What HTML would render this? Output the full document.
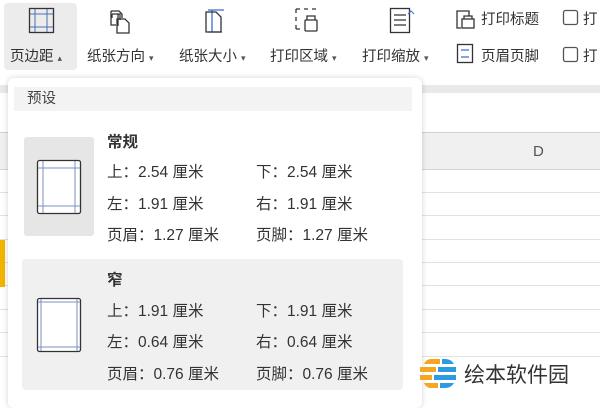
<!DOCTYPE html><html><head><meta charset="utf-8"><style>
*{margin:0;padding:0;box-sizing:border-box}
body{width:600px;height:400px;overflow:hidden;background:#fff;font-family:"Liberation Sans","Noto Sans CJK SC",sans-serif;color:#333;position:relative}
.a{position:absolute}
.lbl{font-size:14.5px;white-space:nowrap;color:#333}
.t{font-size:15.5px;white-space:nowrap;color:#333;line-height:20px}
.car{font-size:9px;color:#555}
.row{position:absolute;left:0;right:0;height:1px;background:#e2e2e2}
</style></head><body>
<div class="a" style="left:4px;top:3px;width:73px;height:67px;background:#ececec;border-radius:4px"></div>
<svg class="a" style="left:0;top:0" width="600" height="80">
<g fill="none" stroke="#333" stroke-width="1.3">
<rect x="29.5" y="8.5" width="24" height="24"/>
<path d="M112 14h8v6M118 14v12M112 18v-4" />
<path d="M111 11h8l3 3v4M111 11v14h5"/><path d="M117 19h8l4 4v10h-12z"/>
<path d="M212 10v22M208 10h16M208 32h14" stroke="#3a6ed8"/>
<path d="M206 12h10l5 5v15h-15z"/>
<path d="M296 9h4M304 9h4M312 9h4M296 9v4M296 17v4M296 25v4M296 29h4"/>
<rect x="305" y="20" width="12" height="11" rx="1"/><path d="M307 20v-4h8v4"/>
<rect x="390.5" y="8.5" width="19" height="24"/><path d="M394 15h12M394 20h12M394 25h12"/>
<path d="M462 11h-5v17h4M457 11h12v5" /><rect x="462" y="19" width="12" height="9"/><path d="M464 19v-3h8v3"/>
<rect x="457.5" y="44.5" width="15" height="18"/><path d="M461 50h8M461 57h8" stroke="#3a6ed8"/>
<rect x="563.5" y="10.5" width="14" height="14" rx="2" stroke="#555"/>
<rect x="563.5" y="47.5" width="14" height="14" rx="2" stroke="#555"/>
</g>
<g stroke="#4a6fb5" stroke-width="1"><path d="M35 9v23M47 9v23M30 14h23M30 27h23"/></g>
<path d="M408 14l3-3 3 3" stroke="#3a6ed8" fill="none"/>
</svg>
<div class="a lbl" style="left:10px;top:45px">页边距 <span class="car">▴</span></div>
<div class="a lbl" style="left:87px;top:45px">纸张方向 <span class="car">▾</span></div>
<div class="a lbl" style="left:179px;top:45px">纸张大小 <span class="car">▾</span></div>
<div class="a lbl" style="left:270px;top:45px">打印区域 <span class="car">▾</span></div>
<div class="a lbl" style="left:362px;top:45px">打印缩放 <span class="car">▾</span></div>
<div class="a lbl" style="left:481px;top:8px">打印标题</div>
<div class="a lbl" style="left:481px;top:45px">页眉页脚</div>
<div class="a lbl" style="left:583px;top:8px">打</div>
<div class="a lbl" style="left:583px;top:45px">打</div>
<div class="a" style="left:0;top:80px;width:600px;height:320px;background:#fff">
<div class="a" style="left:0;top:5px;width:600px;height:8px;background:#e9e9e9"></div>
<div class="a" style="left:0;top:52px;width:600px;height:38px;background:#f0f0f0;border-top:1px solid #d0d0d0;border-bottom:1px solid #d6d6d6"></div>
<div class="a" style="left:533px;top:63px;font-size:15px;color:#555">D</div>
<div class="row" style="top:112px"></div><div class="row" style="top:135px"></div><div class="row" style="top:159px"></div><div class="row" style="top:182px"></div><div class="row" style="top:205px"></div><div class="row" style="top:229px"></div><div class="row" style="top:252px"></div><div class="row" style="top:276px"></div>
<div class="a" style="left:0;top:160px;width:5px;height:47px;background:#f0b400"></div>
</div>
<div class="a" style="left:8px;top:78px;width:414px;height:330px;background:#fff;border-radius:6px;box-shadow:0 0 6px rgba(0,0,0,.18)"></div>
<div class="a" style="left:14px;top:87px;width:398px;height:24px;background:#f3f3f3"></div>
<div class="a t" style="left:27px;top:89px;color:#444;font-size:14.5px">预设</div>
<div class="a" style="left:24px;top:137px;width:70px;height:99px;background:#e6e6e6;border-radius:3px"></div>
<div class="a" style="left:22px;top:259px;width:381px;height:131px;background:#f0f0f0;border-radius:4px"></div>
<svg class="a" style="left:0;top:0" width="120" height="400">
<rect x="37.5" y="160.5" width="43" height="53" rx="2" fill="#fff" stroke="#333" stroke-width="1.3"/>
<path d="M43 161v52M75 161v52M38 168h42M38 206h42" stroke="#7a90c0" stroke-width="1"/>
<rect x="37.5" y="298.5" width="43" height="53" rx="2" fill="#fff" stroke="#333" stroke-width="1.3"/>
<path d="M41 299v52M77 299v52M38 302h42M38 347h42" stroke="#7a90c0" stroke-width="1"/>
</svg>
<div class="a t" style="left:107px;top:133px;font-weight:bold">常规</div>
<div class="a t" style="left:107px;top:163px">上：2.54 厘米</div><div class="a t" style="left:256px;top:163px">下：2.54 厘米</div>
<div class="a t" style="left:107px;top:195px">左：1.91 厘米</div><div class="a t" style="left:256px;top:195px">右：1.91 厘米</div>
<div class="a t" style="left:107px;top:226px">页眉：1.27 厘米</div><div class="a t" style="left:256px;top:226px">页脚：1.27 厘米</div>
<div class="a t" style="left:107px;top:271px;font-weight:bold">窄</div>
<div class="a t" style="left:107px;top:302px">上：1.91 厘米</div><div class="a t" style="left:256px;top:302px">下：1.91 厘米</div>
<div class="a t" style="left:107px;top:333px">左：0.64 厘米</div><div class="a t" style="left:256px;top:333px">右：0.64 厘米</div>
<div class="a t" style="left:107px;top:365px">页眉：0.76 厘米</div><div class="a t" style="left:256px;top:365px">页脚：0.76 厘米</div>
<svg class="a" style="left:418px;top:353px" width="42" height="42">
<path d="M12 6h10v5H6a8 8 0 0 1 6-5z" fill="#f5a623"/><path d="M24 6h4a10 10 0 0 1 8 5H24z" fill="#2d9be0"/>
<path d="M2 14h16v5H2z" fill="#f5a623"/><path d="M20 14h18v5H20z" fill="#2d9be0"/>
<path d="M2 22h12v5H2z" fill="#f5a623"/><path d="M16 22h22v5H16z" fill="#2d9be0"/>
<path d="M6 30h14v5h-8a8 8 0 0 1-6-5z" fill="#f5a623"/><path d="M22 30h14a10 10 0 0 1-8 5h-6z" fill="#2d9be0"/>
</svg>
<div class="a" style="left:464px;top:359px;font-size:21px;color:#333;white-space:nowrap">绘本软件园</div>
</body></html>
